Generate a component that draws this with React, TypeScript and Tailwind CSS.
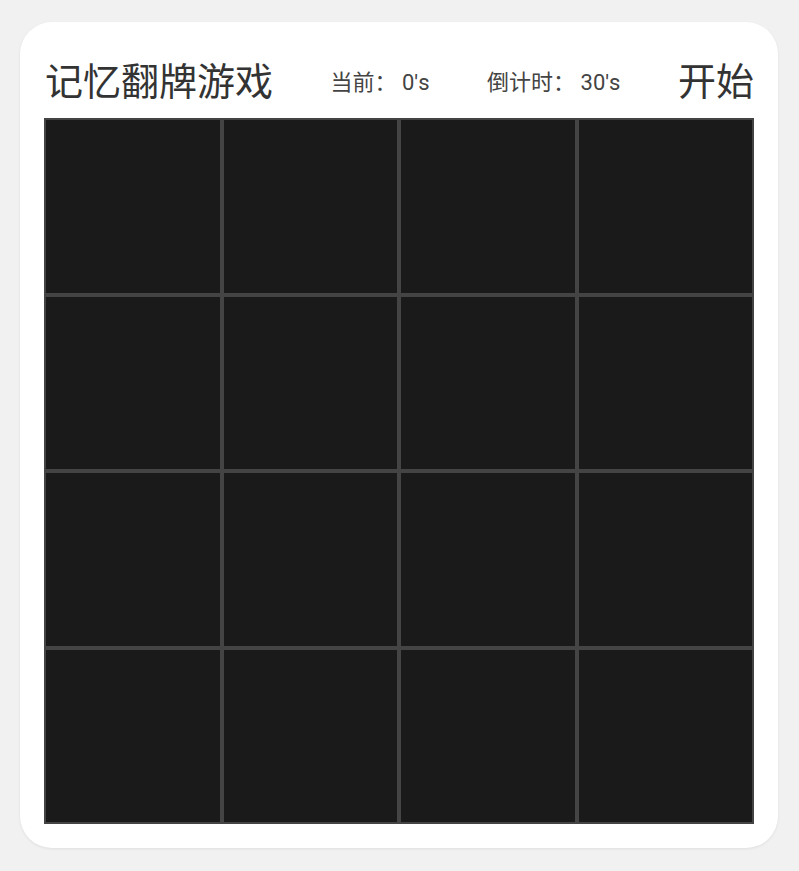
const cards = Array.from({ length: 16 }, (_, i) => i);

export default function App() {
  return (
    <div
      className="min-h-screen bg-[#f1f1f1] pt-[22px] pl-[20px]"
      style={{ fontFamily: "Roboto, 'Noto Sans CJK SC', sans-serif" }}
    >
      <div className="w-[758px] rounded-[32px] bg-white px-6 pt-6 pb-6 shadow-[0_1px_3px_rgba(0,0,0,0.08)]">
        <div className="flex h-[72px] items-center justify-between pl-[1px] text-[#333]">
          <h1 className="text-[38px] leading-none">记忆翻牌游戏</h1>
          <span className="text-[22px] text-[#444]">当前： 0's</span>
          <span className="text-[22px] text-[#444]">倒计时： 30's</span>
          <button className="text-[38px] leading-none">开始</button>
        </div>
        <div className="grid h-[706px] grid-cols-4 grid-rows-4">
          {cards.map((i) => (
            <div key={i} className="border-2 border-[#444] bg-[#1a1a1a]" />
          ))}
        </div>
      </div>
    </div>
  );
}
